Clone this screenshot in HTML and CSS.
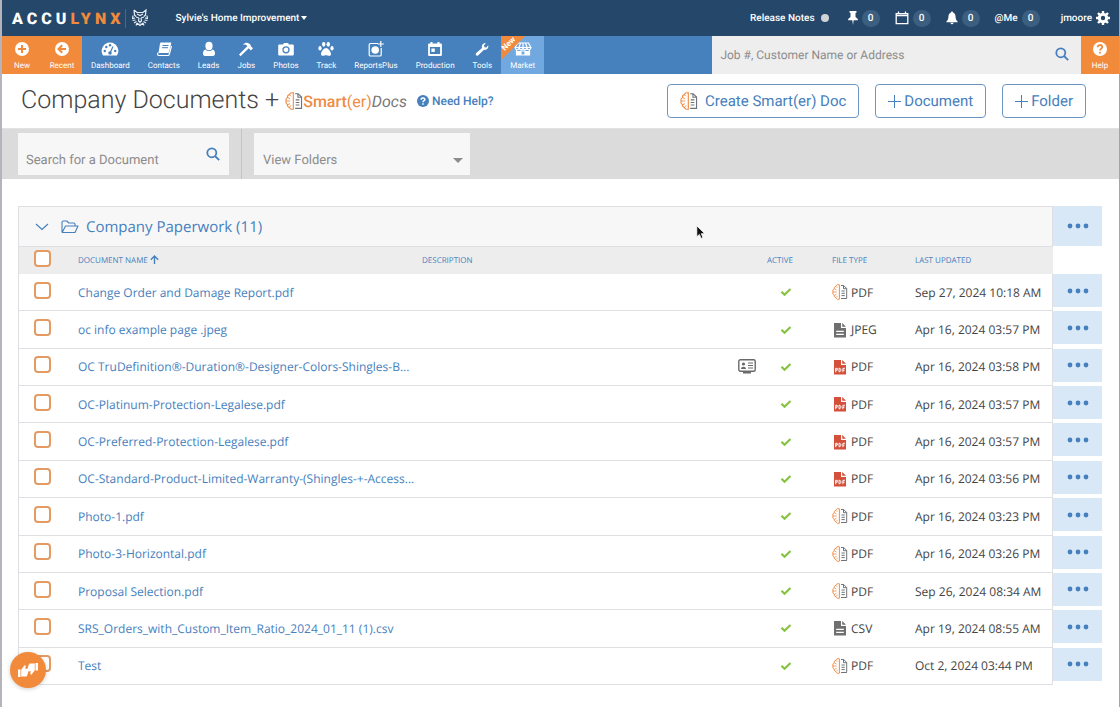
FILE: index.html
```
<!DOCTYPE html>
<html lang="en">
<head>
    <meta charset="UTF-8">
    <meta name="viewport" content="width=device-width, initial-scale=1.0">
    <title>Company Documents | AccuLynx</title>
    <link rel="stylesheet" href="styles.css">
</head>
<body>
    <!-- shared icons -->
    <svg class="sprite" aria-hidden="true">
        <symbol id="i-smart" viewBox="0 0 16 16">
            <g fill="none" stroke="#ee8c45" stroke-width="1">
                <path d="M7.400.8C5.600.3 4.300 1 4 2.300 2.600 2.600 2 3.600 2.300 4.800 1 5.400.600 6.600 1 8c-.4 1.400 0 2.600 1.300 3.200-.3 1.200.3 2.200 1.700 2.500.3 1.300 1.600 2 3.400 1.500z"/>
                <path d="M4 2.500l1.300 1.300M2.500 5l2 1M1 8h3.600M2.500 11.200l2-.8M4.500 13.200l1-1.400" stroke-width=".8"/>
            </g>
            <g fill="none" stroke="#6f7377" stroke-width="1">
                <path d="M9 1.500h2.700l3 3v10H9M11.500 1.500v3.200h3"/>
                <path d="M9.500 7h3.300M9.500 9.300h3.300M9.500 11.600h3.300"/>
            </g>
        </symbol>
        <symbol id="i-file" viewBox="0 0 14 16">
            <path fill="#6f6f6f" d="M1 1h7v5h5v9.500H1zM9.200 1L13 4.800H9.200z"/>
            <path stroke="#fff" stroke-width="1.200" d="M3.200 9.300h7.600M3.200 12.300h7.600"/>
        </symbol>
        <symbol id="i-pdf" viewBox="0 0 14 16">
            <path fill="#d4503b" d="M1 1h7v5h5v9.500H1zM9.200 1L13 4.800H9.200z"/>
            <path fill="none" stroke="#fff" stroke-width="1" d="M2.700 13.200V9.300h1.500v1.900H2.700M6 9.300v3.400h1l.8-.8v-1.800L7 9.300zM9.900 13.200V9.300h2M9.900 11.200h1.600"/>
        </symbol>
        <symbol id="i-check" viewBox="0 0 12 10">
            <path fill="none" stroke="#86c440" stroke-width="2.200" d="M1.500 4.800l3 3 6-5.800"/>
        </symbol>
        <symbol id="i-search" viewBox="0 0 14 14">
            <path fill="none" stroke="#4680bd" stroke-width="1.800" d="M10.300 5.800a4.500 4.500 0 1 1-9 0 4.500 4.500 0 0 1 9 0zM9 9l4.200 4.200"/>
        </symbol>
        <symbol id="i-dots" viewBox="0 0 22 6">
            <g fill="#4680bd"><circle cx="3" cy="3" r="2.400"/><circle cx="11" cy="3" r="2.400"/><circle cx="19" cy="3" r="2.400"/></g>
        </symbol>
    </svg>

    <div class="app">
        <header class="topbar">
            <a class="logo" href="#"><span class="logo-text">ACCU<span class="logo-accent">LYNX</span></span>
                <svg class="lynx" viewBox="0 0 16 18" fill="none" stroke="#e8edf2" stroke-width="1.200">
                    <path d="M2 1l3 2.500h6L14 1l-.5 5-1.500 1.500M2 1l.5 5L4 7.500M5 5l3 1.500L11 5M4 8l3 1M12 8l-3 1M7 9l-.5 3L8 13l1.500-1L9 9M8 13v1.500M5 14l3 2.500 3-2.500M1 6.500l-.4 3L3 9M.6 11.500L3.500 11M2 14l2.500-1.500M4 16.500L5 14M15 6.500l.4 3L13 9M15.400 11.500L12.500 11M14 14l-2.500-1.500M12 16.500L11 14"/>
                </svg>
            </a>
            <button class="company">Sylvie's Home Improvement<i class="caret"></i></button>
            <nav class="user-links">
                <a class="release" href="#">Release Notes<i class="dot"></i></a>
                <a href="#" aria-label="Pinned">
                    <svg width="10" height="14" viewBox="0 0 10 14"><path fill="#fff" d="M1.500 0h7v1.500l-1 .5v4L9.800 8v1.200H5.700L5 14l-.7-4.800H.2V8l2.300-2V2l-1-.5z"/></svg>
                    <span class="count">0</span>
                </a>
                <a href="#" aria-label="Calendar">
                    <svg width="14" height="14" viewBox="0 0 14 14"><path fill="none" stroke="#fff" stroke-width="1.300" d="M1.200 2.700h11.600v10H1.200zM1.200 4.500h11.600M3.500.5v2.500M10.500.5v2.500"/></svg>
                    <span class="count">0</span>
                </a>
                <a href="#" aria-label="Alerts">
                    <svg width="12" height="14" viewBox="0 0 12 14"><path fill="#fff" d="M6 .5c.7 0 1 .5 1 1.100C9 2.200 9.500 4 9.600 6c.1 2.300.9 3.500 2 4.500v.7H.4v-.7c1.100-1 1.900-2.200 2-4.500C2.500 4 3 2.200 5 1.600c0-.6.3-1.100 1-1.100zM4.500 11.700h3a1.500 1.500 0 0 1-3 0z"/></svg>
                    <span class="count">0</span>
                </a>
                <a href="#">@Me <span class="count">0</span></a>
                <a class="user" href="#">jmoore
                    <svg width="14" height="14" viewBox="0 0 14 14"><circle cx="7" cy="7" r="3.700" fill="none" stroke="#fff" stroke-width="3"/><path stroke="#fff" stroke-width="2.400" d="M7 0v3M7 11v3M0 7h3M11 7h3M2 2l2.200 2.200M9.800 9.800L12 12M12 2L9.800 4.200M4.200 9.800L2 12"/></svg>
                </a>
            </nav>
        </header>

        <div class="navbar">
            <nav class="quick">
                <a href="#">
                    <svg viewBox="0 0 16 16"><circle cx="8" cy="8" r="7" fill="#fff"/><path stroke="#f18a3a" stroke-width="2" d="M8 4v8M4 8h8"/></svg>
                    New</a>
                <a href="#">
                    <svg viewBox="0 0 16 16"><circle cx="8" cy="8" r="7" fill="#fff"/><path fill="none" stroke="#f18a3a" stroke-width="2" d="M12 8H5M8.200 4.300L4.500 8l3.700 3.700"/></svg>
                    Recent</a>
            </nav>
            <nav class="sections">
                <a href="#">
                    <svg viewBox="0 0 18 16"><path fill="#fff" d="M9 1.500a8.500 8.500 0 0 0-7 13h14a8.500 8.500 0 0 0-7-13z"/><g fill="#4680bd"><circle cx="3.800" cy="10" r="1.200"/><circle cx="5.300" cy="6" r="1.200"/><circle cx="9" cy="4.300" r="1.200"/><circle cx="14.200" cy="10" r="1.200"/><circle cx="9" cy="12" r="1.800"/></g><path stroke="#4680bd" stroke-width="1.200" d="M9 12l3-6.500"/></svg>
                    Dashboard</a>
                <a href="#">
                    <svg viewBox="0 0 16 16"><path fill="#fff" d="M5 1.500h9.500c.7 0 .9.500.7 1L12.700 12H2.500L4 2.500c.1-.6.4-1 1-1z"/><path fill="none" stroke="#fff" stroke-width="1.200" d="M2.300 11.500c-1.200 1.500-.6 3 .5 3H12c.7 0 1-.4 1.200-1L15.500 5"/><path stroke="#4680bd" d="M6.500 4.500h6M6 6.700h6"/></svg>
                    Contacts</a>
                <a href="#">
                    <svg viewBox="0 0 16 16"><ellipse cx="8" cy="5" rx="3.600" ry="4.200" fill="#fff"/><path fill="#fff" d="M4.500 8.500C2.700 9 2 10.500 2 12.500 2 14 2.700 15 4 15h8c1.300 0 2-1 2-2.500 0-2-.7-3.500-2.500-4-2 2-5 2-7 0z"/></svg>
                    Leads</a>
                <a href="#">
                    <svg viewBox="0 0 16 16"><path fill="#fff" d="M1 13.500L9.500 5 7.300 3.500 5 3.700C7 1.500 9 1.200 11 2.500l1.600 1.300.2 1.400 2.200 2-2.200 2.300-2-2.200-8.300 8z"/></svg>
                    Jobs</a>
                <a href="#">
                    <svg viewBox="0 0 16 16"><path fill="#fff" d="M5 3.500L6 2h4l1 1.500h3.500c.8 0 1.300.5 1.300 1.300v8.400c0 .8-.5 1.300-1.300 1.300h-13c-.8 0-1.300-.5-1.300-1.300V4.800c0-.8.5-1.300 1.300-1.300z"/><circle cx="8" cy="8.800" r="3" fill="none" stroke="#4680bd" stroke-width="1.300"/></svg>
                    Photos</a>
                <a href="#">
                    <svg viewBox="0 0 16 16" fill="#fff"><ellipse cx="5.700" cy="3.300" rx="1.700" ry="2.400"/><ellipse cx="10.300" cy="3.300" rx="1.700" ry="2.400"/><ellipse cx="2" cy="7.300" rx="1.600" ry="2.200"/><ellipse cx="14" cy="7.300" rx="1.600" ry="2.200"/><path d="M8 7c2 0 5 3.500 5 6 0 3-3.500 1.300-5 1.300S3 16 3 13c0-2.500 3-6 5-6z"/></svg>
                    Track</a>
                <a href="#">
                    <svg viewBox="0 0 16 16"><path fill="none" stroke="#fff" stroke-width="1.200" d="M10 2.500H2.500c-.8 0-1.300.5-1.300 1.300v9.900c0 .8.500 1.300 1.300 1.300h9.400c.8 0 1.300-.5 1.300-1.300V7M12.800 0v6M9.800 3h6"/><circle cx="7.200" cy="9" r="3.800" fill="#fff"/></svg>
                    ReportsPlus</a>
                <a href="#">
                    <svg viewBox="0 0 16 16"><path fill="#fff" d="M2 2.500h1.500V1h2v1.500h5V1h2v1.500H14c.5 0 .9.400.9.900v10.700c0 .5-.4.900-.9.900H2c-.5 0-.9-.4-.9-.9V3.400c0-.5.4-.9.900-.9z"/><path fill="#4680bd" d="M2.900 6h10.200v7H2.900z"/><path fill="#fff" d="M4.400 7.500h3.400v3.400H4.400z"/></svg>
                    Production</a>
                <a href="#">
                    <svg viewBox="0 0 16 16"><path fill="#fff" d="M2 12.200L8 7C7.300 4.500 8.800 2 11.700 2L10 4.500l.5 1.700 1.900.3L14.200 4.300c.7 3-1.500 5-4.200 4.500L4 14.500c-1.500 1-3-1-2-2.300z"/></svg>
                    Tools</a>
                <a class="active" href="#">
                    <svg viewBox="0 0 18 16"><path fill="none" stroke="#fff" stroke-width="1.200" d="M3.500 2h11l2.300 4.500H1.200zM1.200 6.500c0 3 3.900 3 3.900 0 0 3 3.900 3 3.900 0 0 3 3.900 3 3.900 0 0 3 3.900 3 3.900 0M6.500 2L5 6.500M11.500 2L13 6.500M9 2v4.500M2.500 9v5h13V9M7 14v-4h4v4"/><path fill="#fff" d="M3 10h4v4H3zM11 10h4v4h-4z"/></svg>
                    Market<span class="ribbon"><b>New</b></span></a>
            </nav>
            <form class="site-search">
                <input type="text" placeholder="Job #, Customer Name or Address" aria-label="Job #, Customer Name or Address">
                <button type="button" aria-label="Search"><svg width="14" height="14"><use href="#i-search"/></svg></button>
            </form>
            <a class="help-tab" href="#">
                <svg viewBox="0 0 16 16"><circle cx="8" cy="8" r="7" fill="#fff"/><path fill="none" stroke="#f18a3a" stroke-width="1.800" d="M5.700 6.300c0-3 4.600-3 4.600-.2C10.300 7.700 8 7.600 8 9.600M8 10.800v1.700"/></svg>
                Help</a>
        </div>

        <section class="page-head">
            <h1>Company Documents +</h1>
            <a class="smart-logo" href="#"><svg width="18" height="18"><use href="#i-smart"/></svg><b>Smart<span>(er)</span></b><em>Docs</em></a>
            <a class="need-help" href="#">
                <svg width="12" height="12" viewBox="0 0 16 16"><circle cx="8" cy="8" r="8" fill="#4680bd"/><path fill="none" stroke="#fff" stroke-width="2" d="M5.500 6.300c0-3.200 5-3.200 5-.2C10.500 7.700 8 7.600 8 9.600M8 11v2"/></svg>
                Need Help?</a>
            <div class="actions">
                <button class="btn"><svg width="18" height="18"><use href="#i-smart"/></svg>Create Smart(er) Doc</button>
                <button class="btn"><i class="plus"></i>Document</button>
                <button class="btn"><i class="plus"></i>Folder</button>
            </div>
        </section>

        <section class="filters">
            <div class="field doc-search">
                <input type="text" placeholder="Search for a Document" aria-label="Search for a Document">
                <button type="button" aria-label="Search"><svg width="14" height="14"><use href="#i-search"/></svg></button>
            </div>
            <div class="divider"></div>
            <div class="field folders">
                <select aria-label="View Folders"><option>View Folders</option></select>
                <i class="caret"></i>
            </div>
        </section>

        <main class="documents">
            <div class="group">
                <div class="group-title">
                    <button aria-label="Collapse folder"><svg width="14" height="8" viewBox="0 0 14 8"><path fill="none" stroke="#4680bd" stroke-width="1.200" d="M1 1l6 5.500L13 1"/></svg></button>
                    <svg width="18" height="14" viewBox="0 0 18 14"><path fill="none" stroke="#4680bd" stroke-width="1.100" stroke-linejoin="round" d="M1 12V2.200C1 1.400 1.500 1 2.200 1h3.600l2 2h5c.7 0 1.200.4 1.200 1.200V6M1.200 12.500L4.500 6H17l-3 6.500z"/></svg>
                    <h2>Company Paperwork (11)</h2>
                </div>
                <button class="more" aria-label="Folder options"><svg width="24" height="6"><use href="#i-dots"/></svg></button>
            </div>

            <table>
                <thead>
                    <tr>
                        <th class="c-check"><input type="checkbox" aria-label="Select all"></th>
                        <th class="c-name">DOCUMENT NAME <svg width="9" height="9" viewBox="0 0 9 9"><path fill="none" stroke="#4680bd" stroke-width="1.400" d="M4.500 9V1.200M.8 4.800l3.700-3.700 3.700 3.700"/></svg></th>
                        <th class="c-desc">DESCRIPTION</th>
                        <th class="c-share"></th>
                        <th class="c-active">ACTIVE</th>
                        <th class="c-type">FILE TYPE</th>
                        <th class="c-date">LAST UPDATED</th>
                        <th class="c-more"></th>
                    </tr>
                </thead>
                <tbody id="rows"></tbody>
            </table>
        </main>

        <button class="feedback" aria-label="Feedback">
            <svg width="22" height="18" viewBox="0 0 22 18" fill="#fff"><path d="M1 8.500h2.500V16H1zM4.200 8.700L7 5c.3-1 1.700-.8 1.700.5l-.4 2.300h2.500c1 0 1.300.9.900 1.700l-1.500 5c-.2.700-.6 1-1.300 1H4.200zM21 9.500h-2.500V2H21zM17.800 9.300L15 13c-.3 1-1.700.8-1.700-.5l.4-2.300h-2.500c-1 0-1.300-.9-.9-1.700l1.500-5c.2-.7.6-1 1.300-1h4.700z"/></svg>
        </button>

        <svg class="pointer" width="10" height="15" viewBox="0 0 10 15"><path fill="#111" stroke="#fff" stroke-width=".8" d="M.8.800v11l2.600-2.400 1.700 4 1.900-.8-1.700-3.900h3.500z"/></svg>
    </div>

    <script src="documents.js"></script>
</body>
</html>
```

FILE: styles.css
```
:root {
    --navy: #25476a;
    --blue: #4680bd;
    --orange: #f18a3a;
    --line: #dfdfe3;
}

* {
    box-sizing: border-box;
}

body {
    margin: 0;
    background: #fff;
    font-family: "Open Sans", "Noto Sans", sans-serif;
    color: #444;
    text-rendering: geometricPrecision;
}

a {
    color: inherit;
    text-decoration: none;
}

button,
input,
select {
    font: inherit;
    color: inherit;
    text-rendering: inherit;
    border: 0;
    padding: 0;
    margin: 0;
    background: none;
}

svg {
    flex: none;
}

.sprite {
    position: absolute;
    width: 0;
    height: 0;
}

.app {
    min-height: 100vh;
    border-left: 2px solid #b4b4ba;
    border-right: 1px solid #a5a5a8;
}

/* top bar */
.topbar {
    display: flex;
    align-items: center;
    height: 36px;
    padding: 0 9px 0 10px;
    background: var(--navy);
    color: #fff;
    font: 500 10px Roboto, sans-serif;
}

.logo {
    display: flex;
    align-items: center;
}

.logo-text {
    font: 900 16px Roboto, sans-serif;
    letter-spacing: 4px;
    border-right: 1px solid #4b6885;
}

.logo-accent {
    color: var(--orange);
}

.lynx {
    width: 16px;
    height: 18px;
    margin-left: 6px;
}

.company {
    display: flex;
    align-items: center;
    margin-left: 28px;
}

.caret {
    border: 3px solid transparent;
    border-top: 4px solid currentColor;
    border-bottom: 0;
    margin-left: 2px;
}

.user-links {
    display: flex;
    align-items: center;
    gap: 15px;
    margin-left: auto;
}

.user-links a {
    display: flex;
    align-items: center;
    gap: 4px;
}

.user-links .release {
    gap: 6px;
    margin-right: 4px;
}

.user-links .user {
    margin-left: 6px;
}

.dot {
    width: 8px;
    height: 8px;
    border-radius: 50%;
    background: #d0d4d6;
}

.count {
    width: 18px;
    height: 17px;
    border-radius: 9px;
    background: #3c5f80;
    line-height: 17px;
    text-align: center;
}

/* navigation */
.navbar {
    display: flex;
    height: 38px;
    background: var(--blue);
    color: #fff;
    font: 8px Roboto, sans-serif;
}

.navbar nav {
    display: flex;
}

.navbar nav a,
.help-tab {
    display: flex;
    flex-direction: column;
    align-items: center;
    gap: 3px;
    padding: 5px 9px 0;
    line-height: 12px;
}

.navbar nav svg,
.help-tab svg {
    width: 18px;
    height: 16px;
}

.navbar .quick a {
    width: 40px;
    padding: 5px 0 0;
    background: var(--orange);
}

.navbar .sections .active {
    position: relative;
    background: #72a8e0;
}

.ribbon {
    position: absolute;
    left: 0;
    top: 0;
    width: 24px;
    height: 24px;
    background: var(--orange);
    clip-path: polygon(0 0, 100% 0, 0 100%);
}

.ribbon b {
    position: absolute;
    left: 0;
    top: 2px;
    transform: rotate(-45deg);
}

.site-search {
    display: flex;
    width: 33%;
    margin-left: auto;
    padding: 0 12px 0 8px;
    background: #eee;
    color: #999;
    font-size: 12px;
}

.site-search input {
    flex: 1;
    min-width: 0;
    outline: 0;
}

input::placeholder {
    color: #8c8c8c;
    opacity: 1;
}

.help-tab {
    width: 38px;
    background: var(--orange);
}

/* page heading */
.page-head {
    display: flex;
    align-items: center;
    height: 54px;
    padding: 0 33px 0 19px;
    font-family: Roboto, sans-serif;
    color: var(--blue);
}

h1 {
    margin: 0;
    padding-bottom: 2px;
    font-size: 25px;
    font-weight: 300;
    color: #444;
}

.smart-logo {
    display: flex;
    align-items: center;
    margin-left: 6px;
    font-size: 16px;
}

.smart-logo b {
    font-weight: 500;
    color: #ee8c45;
}

.smart-logo b span {
    font-weight: 400;
}

.smart-logo em {
    color: #777;
}

.need-help {
    display: flex;
    align-items: center;
    gap: 3px;
    margin-left: 10px;
    font-size: 12px;
    font-weight: 500;
}

.actions {
    display: flex;
    align-items: center;
    gap: 16px;
    margin-left: auto;
}

.btn {
    display: flex;
    align-items: center;
    gap: 3px;
    height: 34px;
    padding: 0 12px;
    border: 1px solid #6a96c4;
    border-radius: 4px;
    font-size: 15px;
}

.btn svg {
    margin-right: 4px;
}

.plus {
    width: 13px;
    height: 13px;
    background: linear-gradient(var(--blue), var(--blue)) center / 13px 1px no-repeat,
                linear-gradient(var(--blue), var(--blue)) center / 1px 13px no-repeat;
}

/* filters */
.filters {
    display: flex;
    gap: 12px;
    height: 51px;
    padding: 0 16px;
    border-top: 1px solid #e4e0e6;
    background: #dbdbdb;
    color: #8c8c8c;
    font: 13px Roboto, sans-serif;
}

.field {
    position: relative;
    display: flex;
    align-items: center;
    height: 42px;
    margin-top: 4px;
    padding: 0 7px 0 9px;
    background: #f7f7f7;
}

.doc-search {
    width: 211px;
    padding: 0 9px 0 8px;
}

.doc-search input {
    flex: 1;
    min-width: 0;
    padding-top: 12px;
    outline: 0;
}

.doc-search button {
    padding-top: 4px;
}

.divider {
    width: 1px;
    background: #c4c4c4;
}

.folders {
    width: 216px;
}

.folders select {
    flex: 1;
    padding-top: 12px;
    appearance: none;
}

.folders .caret {
    margin-top: 12px;
    border-width: 5px 5px 0;
}

/* document list */
.documents {
    padding: 27px 17px 20px 16px;
}

.group {
    display: flex;
    height: 41px;
}

.group-title {
    flex: 1;
    display: flex;
    align-items: center;
    padding-left: 16px;
    border: 1px solid var(--line);
    background: #f7f7f7;
    color: var(--blue);
}

.group-title button {
    display: flex;
    margin-right: 12px;
}

h2 {
    margin: 0 0 0 7px;
    font-size: 15px;
    font-weight: 400;
}

.more {
    display: flex;
    align-items: center;
    justify-content: center;
    width: 49px;
    height: 33px;
    background: #d9e8f7;
}

.group .more {
    height: 40px;
}

table {
    width: 100%;
    height: 438px;
    table-layout: fixed;
    border-spacing: 0;
    font-size: 12px;
}

th {
    height: 27px;
    padding: 0;
    background: #ededed;
    color: var(--blue);
    font-size: 8px;
    font-weight: 400;
    text-align: left;
}

th svg {
    vertical-align: -1px;
}

td {
    padding: 0;
    border-bottom: 1px solid var(--line);
    white-space: nowrap;
}

td a {
    color: var(--blue);
}

th:first-child,
td:first-child {
    border-left: 1px solid var(--line);
}

.c-check {
    width: 60px;
    padding-left: 15px;
}

.c-name {
    width: 344px;
}

.c-share {
    width: 29px;
}

.c-active {
    width: 65px;
}

.c-type {
    width: 83px;
}

.c-date {
    width: 138px;
}

th.c-more {
    width: 49px;
    background: #fff;
}

td.c-date,
.group-title {
    border-right: 1px solid var(--line);
}

td.c-more {
    border-bottom: 0;
    vertical-align: top;
}

td.c-active svg {
    margin-left: 13px;
}

td svg {
    display: block;
}

td.c-type span {
    display: flex;
    align-items: center;
    gap: 3px;
}

input[type="checkbox"] {
    display: block;
    appearance: none;
    width: 17px;
    height: 17px;
    margin-bottom: 4px;
    border: 2px solid #e39a63;
    border-radius: 4px;
    background: #fff;
}

.feedback {
    position: fixed;
    left: 10px;
    bottom: 19px;
    display: flex;
    align-items: center;
    justify-content: center;
    width: 36px;
    height: 36px;
    border-radius: 50%;
    background: var(--orange);
    box-shadow: 0 1px 4px rgba(0, 0, 0, 0.2);
}

.pointer {
    position: absolute;
    left: 696px;
    top: 225px;
}
```

FILE: documents.js
```
const documents = [
    ['Change Order and Damage Report.pdf', 'smart', 'PDF', 'Sep 27, 2024 10:18 AM'],
    ['oc info example page .jpeg', 'file', 'JPEG', 'Apr 16, 2024 03:57 PM'],
    ['OC TruDefinition®-Duration®-Designer-Colors-Shingles-B...', 'pdf', 'PDF', 'Apr 16, 2024 03:58 PM', true],
    ['OC-Platinum-Protection-Legalese.pdf', 'pdf', 'PDF', 'Apr 16, 2024 03:57 PM'],
    ['OC-Preferred-Protection-Legalese.pdf', 'pdf', 'PDF', 'Apr 16, 2024 03:57 PM'],
    ['OC-Standard-Product-Limited-Warranty-(Shingles-+-Access...', 'pdf', 'PDF', 'Apr 16, 2024 03:56 PM'],
    ['Photo-1.pdf', 'smart', 'PDF', 'Apr 16, 2024 03:23 PM'],
    ['Photo-3-Horizontal.pdf', 'smart', 'PDF', 'Apr 16, 2024 03:26 PM'],
    ['Proposal Selection.pdf', 'smart', 'PDF', 'Sep 26, 2024 08:34 AM'],
    ['SRS_Orders_with_Custom_Item_Ratio_2024_01_11 (1).csv', 'file', 'CSV', 'Apr 19, 2024 08:55 AM'],
    ['Test', 'smart', 'PDF', 'Oct 2, 2024 03:44 PM']
];

const sharedIcon = `<svg width="18" height="15" viewBox="0 0 18 15">
    <rect x=".8" y=".8" width="16.400" height="11.500" rx="1.500" fill="none" stroke="#6a6a6a" stroke-width="1.400"/>
    <path fill="#6a6a6a" d="M5 13h8v1.600H5zM3 10c0-3 5-3 5 0z"/><circle cx="5.500" cy="5" r="1.600" fill="#6a6a6a"/>
    <path stroke="#6a6a6a" stroke-width="1.200" d="M10 4h5M10 6.500h5M10 9h5"/></svg>`;

document.getElementById('rows').innerHTML = documents.map(([name, icon, type, date, shared]) => `
    <tr>
        <td class="c-check"><input type="checkbox" aria-label="Select ${name}"></td>
        <td class="c-name"><a href="#">${name}</a></td>
        <td></td>
        <td>${shared ? sharedIcon : ''}</td>
        <td class="c-active"><svg width="12" height="10"><use href="#i-check"/></svg></td>
        <td class="c-type"><span><svg width="16" height="16"><use href="#i-${icon}"/></svg>${type}</span></td>
        <td class="c-date">${date}</td>
        <td class="c-more"><button class="more" aria-label="Options for ${name}"><svg width="24" height="6"><use href="#i-dots"/></svg></button></td>
    </tr>`).join('');
```
